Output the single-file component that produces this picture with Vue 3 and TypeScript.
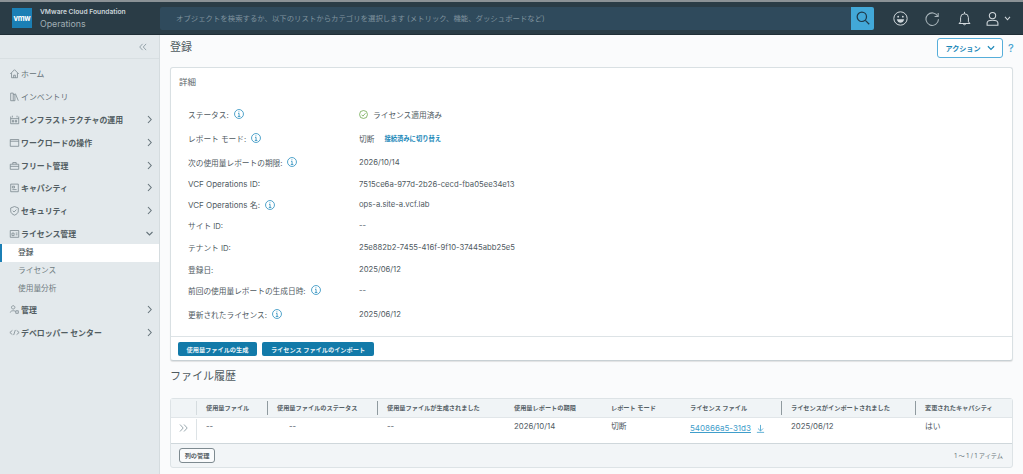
<script setup lang="ts">
interface NavItem { label: string; bold: boolean; icon: string; arrow?: string }
const navTop: NavItem[] = [
  { label: 'ホーム', bold: false, icon: 'home' },
  { label: 'インベントリ', bold: false, icon: 'inv' },
  { label: 'インフラストラクチャの運用', bold: true, icon: 'infra', arrow: 'r' },
  { label: 'ワークロードの操作', bold: true, icon: 'work', arrow: 'r' },
  { label: 'フリート管理', bold: true, icon: 'fleet', arrow: 'r' },
  { label: 'キャパシティ', bold: true, icon: 'cap', arrow: 'r' },
  { label: 'セキュリティ', bold: true, icon: 'sec', arrow: 'r' },
  { label: 'ライセンス管理', bold: true, icon: 'lic', arrow: 'd' },
]
const navSub = [
  { label: '登録', active: true },
  { label: 'ライセンス', active: false },
  { label: '使用量分析', active: false },
]
const navBottom: NavItem[] = [
  { label: '管理', bold: true, icon: 'admin', arrow: 'r' },
  { label: 'デベロッパー センター', bold: true, icon: 'dev', arrow: 'r' },
]
const iconPaths: Record<string, string> = {
  home: 'M1.5 7 L6.5 2 L11.5 7 M3 6 V11.5 H10 V6 M5.5 11.5 V8.5 H7.5 V11.5',
  inv: 'M2 2.5 H5 V11.5 H2 Z M5 4 H7 V11.5 H5 M7.5 3 L11 11.5',
  infra: 'M2 3 V11.5 H11.5 V3 M2 5.5 H11.5 M4 2 V4 M9.5 2 V4 M4 7.5 H5.5 V9.5 H4 Z M7.5 7.5 H9 V9.5 H7.5 Z',
  work: 'M1.5 3 H11.5 V11 H1.5 Z M1.5 5 H11.5',
  fleet: 'M1.5 5 H11.5 V11 H1.5 Z M4.5 5 V3 H8.5 V5 M1.5 7.5 H11.5',
  cap: 'M2 2.5 H11 V11.5 H2 Z M4 5 H6.5 V7 H4 Z M4 9 H9',
  sec: 'M6.5 1.8 L11 3.5 V7 C11 9.5 9 11 6.5 12 C4 11 2 9.5 2 7 V3.5 Z M4.5 6.8 L6 8.3 L8.7 5.5',
  lic: 'M1.5 3 H11.5 V11 H1.5 Z M3.5 6 H6 V9 H3.5 Z M8 6 H10 M8 8 H10',
  admin: 'M5 2 A2 2 0 1 1 4.9 2 Z M1.5 10 C1.5 7.5 7.5 7.5 7.5 9 M8 8 H11 V11 H8 Z',
  dev: 'M4 4 L1 6.5 L4 9 M9 4 L12 6.5 L9 9 M7.5 3.5 L5.5 9.5',
}
const details = [
  { label: 'ステータス:', info: true, kind: 'status', value: 'ライセンス適用済み', h: 24, latin: false },
  { label: 'レポート モード:', info: true, kind: 'mode', value: '切断', h: 24, latin: false },
  { label: '次の使用量レポートの期限:', info: true, kind: 'text', value: '2026/10/14', h: 24, latin: false },
  { label: 'VCF Operations ID:', info: false, kind: 'text', value: '7515ce6a-977d-2b26-cecd-fba05ee34e13', h: 20, latin: true },
  { label: 'VCF Operations 名:', info: true, kind: 'text', value: 'ops-a.site-a.vcf.lab', h: 21, latin: true },
  { label: 'サイト ID:', info: false, kind: 'text', value: '--', h: 20, latin: false },
  { label: 'テナント ID:', info: false, kind: 'text', value: '25e882b2-7455-416f-9f10-37445abb25e5', h: 25, latin: false },
  { label: '登録日:', info: false, kind: 'text', value: '2025/06/12', h: 18, latin: false },
  { label: '前回の使用量レポートの生成日時:', info: true, kind: 'text', value: '--', h: 24, latin: false },
  { label: '更新されたライセンス:', info: true, kind: 'text', value: '2025/06/12', h: 24, latin: false },
]
const columns = [
  { label: '使用量ファイル', w: 71, sep: true },
  { label: '使用量ファイルのステータス', w: 110, sep: true },
  { label: '使用量ファイルが生成されました', w: 127, sep: false },
  { label: '使用量レポートの期限', w: 97, sep: false },
  { label: 'レポート モード', w: 79, sep: false },
  { label: 'ライセンス ファイル', w: 101, sep: true },
  { label: 'ライセンスがインポートされました', w: 134, sep: true },
  { label: '変更されたキャパシティ', w: 96, sep: false },
]
</script>

<template>
  <div class="app">
    <header class="topbar">
      <div class="brand">
        <div class="logo">vmw</div>
        <div class="brand-text">
          <div class="brand-l1">VMware Cloud Foundation</div>
          <div class="brand-l2">Operations</div>
        </div>
      </div>
      <div class="search">
        <div class="search-input">オブジェクトを検索するか、以下のリストからカテゴリを選択します (メトリック、機能、ダッシュボードなど)</div>
        <div class="search-btn">
          <svg width="14" height="14" viewBox="0 0 18 18" fill="none" stroke="#1f3a4a" stroke-width="1.6"><circle cx="7.5" cy="7.5" r="6"/><path d="M12 12 L17 17"/></svg>
        </div>
      </div>
      <div class="top-icons">
        <svg width="15" height="15" viewBox="0 0 18 18" fill="none" stroke="#d0d7db" stroke-width="1.2"><circle cx="9" cy="9" r="8"/><circle cx="6.2" cy="6.8" r="1.1" fill="#d0d7db" stroke="none"/><circle cx="11.8" cy="6.8" r="1.1" fill="#d0d7db" stroke="none"/><path d="M4.6 10 H13.4 C13 13 10.6 14.2 9 14.2 C7.4 14.2 5 13 4.6 10 Z" fill="#d0d7db" stroke="none"/></svg>
        <svg width="15" height="15" viewBox="0 0 18 18" fill="none" stroke="#a9b5bb" stroke-width="1.3"><path d="M15.4 6.4 A7.5 7.5 0 1 0 16.2 10"/><path d="M11.5 6.6 H15.8 V2.4"/></svg>
        <svg width="15" height="15" viewBox="0 0 18 18" fill="none" stroke="#d0d7db" stroke-width="1.2"><path d="M4.3 13 V8 A4.7 4.7 0 0 1 13.7 8 V13 L15.6 15 H2.4 Z"/><path d="M9 1 V3.2"/><path d="M7.5 15.5 A1.6 1.6 0 0 0 10.5 15.5"/></svg>
        <div class="user">
          <svg width="15" height="15" viewBox="0 0 18 18" fill="none" stroke="#d0d7db" stroke-width="1.3"><circle cx="9" cy="5.5" r="3.8"/><path d="M2.5 17 V14.5 C2.5 12 5.5 11 9 11 C12.5 11 15.5 12 15.5 14.5 V17 Z"/></svg>
          <svg width="7" height="5" viewBox="0 0 8 6" fill="none" stroke="#d0d7db" stroke-width="1.3"><path d="M1 1 L4 4.5 L7 1"/></svg>
        </div>
      </div>
    </header>

    <div class="body">
      <aside class="sidebar">
        <div class="collapse">
          <svg width="8" height="8" viewBox="0 0 9 8" fill="none" stroke="#8c9ba3" stroke-width="1"><path d="M4 .5 L.8 4 L4 7.5 M8 .5 L4.8 4 L8 7.5"/></svg>
        </div>
        <nav class="nav">
          <div v-for="n in navTop" :key="n.label" class="nav-row" :class="{ bold: n.bold }">
            <svg class="nav-icon" width="11" height="11" viewBox="0 0 13 13" fill="none" stroke="#75838a" stroke-width="0.9"><path :d="iconPaths[n.icon]"/></svg>
            <span class="nav-label">{{ n.label }}</span>
            <svg v-if="n.arrow === 'r'" class="arrow" width="7" height="9" viewBox="0 0 7 9" fill="none" stroke="#66747b" stroke-width="1.1"><path d="M2 1 L5.2 4.5 L2 8"/></svg>
            <svg v-if="n.arrow === 'd'" class="arrow" width="7" height="9" viewBox="0 0 7 9" fill="none" stroke="#66747b" stroke-width="1.1"><path d="M.5 3 L3.5 6 L6.5 3"/></svg>
          </div>
          <div class="sub-list">
            <div v-for="s in navSub" :key="s.label" class="nav-sub" :class="{ active: s.active }">{{ s.label }}</div>
          </div>
          <div v-for="n in navBottom" :key="n.label" class="nav-row bold">
            <svg class="nav-icon" width="11" height="11" viewBox="0 0 13 13" fill="none" stroke="#75838a" stroke-width="0.9"><path :d="iconPaths[n.icon]"/></svg>
            <span class="nav-label">{{ n.label }}</span>
            <svg class="arrow" width="7" height="9" viewBox="0 0 7 9" fill="none" stroke="#66747b" stroke-width="1.1"><path d="M2 1 L5.2 4.5 L2 8"/></svg>
          </div>
        </nav>
      </aside>

      <main class="main">
        <div class="page-head">
          <h1 class="page-title">登録</h1>
          <div class="head-actions">
            <button class="action-btn">アクション
              <svg width="8" height="6" viewBox="0 0 9 6" fill="none" stroke="#1a87b8" stroke-width="1.3"><path d="M1 1 L4.5 4.5 L8 1"/></svg>
            </button>
            <span class="help">?</span>
          </div>
        </div>

        <section class="card">
          <div class="card-body">
            <div class="card-title">詳細</div>
            <div class="rows">
              <div v-for="d in details" :key="d.label" class="row" :style="{ height: d.h + 'px' }">
                <div class="row-label" :class="{ latin: d.latin }">
                  <span>{{ d.label }}</span>
                  <svg v-if="d.info" class="info" width="10" height="10" viewBox="0 0 11 11" fill="none" stroke="#2b8fbf" stroke-width="0.9"><circle cx="5.5" cy="5.5" r="4.9"/><path d="M4.4 4.8 H5.6 V8.2 M4.2 8.2 H7 M5.4 2.6 V3.6"/></svg>
                </div>
                <div class="row-value">
                  <svg v-if="d.kind === 'status'" class="ok" width="9" height="9" viewBox="0 0 10 10" fill="none" stroke="#6fa84f" stroke-width="0.9"><circle cx="5" cy="5" r="4.4"/><path d="M2.8 5.2 L4.4 6.8 L7.2 3.6"/></svg>
                  <span>{{ d.value }}</span>
                  <a v-if="d.kind === 'mode'" class="switch">接続済みに切り替え</a>
                </div>
              </div>
            </div>
          </div>
          <div class="card-foot">
            <button class="primary gen">使用量ファイルの生成</button>
            <button class="primary imp">ライセンス ファイルのインポート</button>
          </div>
        </section>

        <h2 class="section-title">ファイル履歴</h2>

        <section class="grid">
          <div class="grid-head">
            <div class="expander-cell"></div>
            <div v-for="c in columns" :key="c.label" class="th" :class="{ sep: c.sep }" :style="{ width: c.w + 'px' }">{{ c.label }}</div>
          </div>
          <div class="grid-row">
            <div class="expander-cell body-exp">
              <svg width="9" height="8" viewBox="0 0 9 8" fill="none" stroke="#9aa8af" stroke-width="1"><path d="M1 .5 L4.2 4 L1 7.5 M5 .5 L8.2 4 L5 7.5"/></svg>
            </div>
            <div class="td" :style="{ width: columns[0].w + 'px' }">--</div>
            <div class="td td-center" :style="{ width: columns[1].w + 'px' }">--</div>
            <div class="td" :style="{ width: columns[2].w + 'px' }">--</div>
            <div class="td" :style="{ width: columns[3].w + 'px' }">2026/10/14</div>
            <div class="td" :style="{ width: columns[4].w + 'px' }">切断</div>
            <div class="td td-link" :style="{ width: columns[5].w + 'px' }">
              <a class="file-link">540866a5-31d3</a>
              <svg class="dl" width="9" height="9" viewBox="0 0 10 10" fill="none" stroke="#3f9ecb" stroke-width="0.9"><path d="M5 1 V7.5 M2.2 5 L5 7.8 L7.8 5 M1 9.3 H9"/></svg>
            </div>
            <div class="td" :style="{ width: columns[6].w + 'px' }">2025/06/12</div>
            <div class="td" :style="{ width: columns[7].w + 'px' }">はい</div>
          </div>
          <div class="grid-foot">
            <button class="manage">列の管理</button>
            <span class="count">1 ～ 1 / 1 アイテム</span>
          </div>
        </section>
      </main>
    </div>
  </div>
</template>

<style>
html, body { margin: 0; padding: 0; overflow: hidden; }
</style>

<style scoped>
.app {
  width: 1023px;
  height: 474px;
  display: flex;
  flex-direction: column;
  overflow: hidden;
  font-family: "Inter", "Noto Sans CJK JP", sans-serif;
  color: #4a5559;
  background: #fafbfc;
}
.topbar {
  height: 35px;
  flex: none;
  box-sizing: border-box;
  border-top: 2px solid #8b9296;
  border-bottom: 1px solid #1f2e36;
  background: #2a3c46;
  display: flex;
  align-items: center;
}
.brand { width: 160px; flex: none; display: flex; align-items: center; padding-left: 12px; box-sizing: border-box; }
.logo {
  width: 20px; height: 20px; background: #1b7fb5; color: #fff;
  font-size: 7.5px; font-weight: 700; display: flex; align-items: center; justify-content: center;
  letter-spacing: -0.3px; margin-right: 8px;
}
.brand-l1 { font-size: 6.7px; color: #ccd5da; font-weight: 600; line-height: 9px; white-space: nowrap; margin-bottom: 1px; }
.brand-l2 { font-size: 8.8px; color: #a0adb4; line-height: 11px; }
.search { flex: none; width: 714px; height: 23px; display: flex; }
.search-input {
  flex: 1; background: #2f4a5c; color: #7f929e; font-size: 7.4px; line-height: 23px;
  padding-left: 16px; border-radius: 2px 0 0 2px; white-space: nowrap; overflow: hidden;
}
.search-btn {
  width: 23px; background: #42a8d8; border-radius: 0 2px 2px 0;
  display: flex; align-items: center; justify-content: center;
}
.top-icons { flex: 1; display: flex; align-items: center; padding-left: 19px; gap: 17px; }
.user { display: flex; align-items: center; gap: 4px; margin-left: -4px; }

.body { flex: 1; display: flex; min-height: 0; }
.sidebar { width: 160px; flex: none; background: #e3e9ec; border-right: 1px solid #d5dcdf; box-sizing: border-box; }
.collapse {
  height: 24px; box-sizing: border-box; border-bottom: 1px solid #d8dfe2;
  display: flex; align-items: center; justify-content: flex-end; padding-right: 12px;
}
.nav { padding-top: 3.5px; }
.nav-row {
  height: 22.8px; display: flex; align-items: center; padding-left: 9px; padding-right: 6px;
  font-size: 7.9px; color: #667278; position: relative;
}
.nav-row.bold { font-weight: 700; color: #525d62; }
.nav-icon { flex: none; margin-right: 1px; }
.nav-label { flex: 1; white-space: nowrap; }
.arrow { flex: none; }
.sub-list { margin: -1px 0 -0.5px; }
.nav-sub {
  height: 18.3px; line-height: 18.3px; font-size: 7.7px; color: #6f7b80; padding-left: 18px; box-sizing: border-box;
}
.nav-sub.active {
  background: #fff; border-left: 2px solid #1b7fb5; padding-left: 16px; color: #4a5559; font-weight: 500;
}
.main { flex: 1; min-width: 0; padding: 0 10px 0 10px; }
.page-head { height: 32px; display: flex; align-items: flex-start; justify-content: space-between; padding-top: 3px; box-sizing: border-box; }
.page-title { margin: 0; font-size: 11px; line-height: 19px; font-weight: 400; color: #4f5a5f; }
.head-actions { display: flex; align-items: center; gap: 5px; }
.action-btn {
  width: 66px; height: 20px; box-sizing: border-box; border: 1px solid #56aeda; border-radius: 3px;
  background: #fff; color: #1a87b8; font-family: inherit; font-size: 7.1px; font-weight: 700;
  display: flex; align-items: center; justify-content: center; gap: 6px; padding: 0;
}
.help { color: #4aa6d2; font-size: 11px; font-weight: 500; width: 5px; margin-right: 0; }
.card {
  background: #fff; border: 1px solid #d9e0e3; border-bottom: 1px solid #c8d0d4; border-radius: 3px;
  box-shadow: 0 1px 1px rgba(0,0,0,.1); height: 294px; box-sizing: border-box;
  display: flex; flex-direction: column;
}
.card-body { flex: 1; padding: 8px 8px 0; }
.card-title { font-size: 8.5px; line-height: 13px; color: #5a6569; margin-top: 0; }
.rows { padding: 13px 0 0 9px; }
.row { display: flex; align-items: center; font-size: 7.7px; color: #4f5a5f; }
.row-label { width: 171px; flex: none; display: flex; align-items: center; gap: 5px; white-space: nowrap; }
.row-label.latin { font-size: 8px; }
.row-value { display: flex; align-items: center; white-space: nowrap; }
.ok { margin-right: 5px; }
.switch { color: #1a87b8; font-size: 6.3px; font-weight: 700; margin-left: 10px; }
.card-foot {
  height: 22px; flex: none; border-top: 1px solid #dde3e6; display: flex; align-items: center;
  padding: 1px 0 0 7px; gap: 5px;
}
.primary {
  height: 14px; border: none; border-radius: 2px; background: #127aa9; color: #e8f2f6;
  font-family: inherit; font-size: 6.2px; font-weight: 600; padding: 0; white-space: nowrap;
}
.gen { width: 79px; }
.imp { width: 112px; }
.section-title { margin: 7px 0 0; font-size: 11px; line-height: 16px; font-weight: 400; color: #4f5a5f; }
.grid {
  margin-top: 14px; border: 1px solid #dde3e6; border-radius: 3px; background: #f2f5f7; box-sizing: border-box; height: 70px;
}
.grid-head { height: 18px; display: flex; align-items: center; border-bottom: 1px solid #e1e6e9; background: #f0f4f6; }
.expander-cell { width: 26px; flex: none; box-sizing: border-box; }
.grid-head .expander-cell { height: 14px; border-right: 1px solid #d5dcdf; }
.th {
  box-sizing: border-box; padding-left: 9px; font-size: 6.2px; font-weight: 600; color: #566166;
  height: 14px; line-height: 14px; white-space: nowrap;
}
.th.sep { border-right: 1px solid #8f9a9f; }
.grid-row { height: 25px; display: flex; background: #fff; border-bottom: 1px solid #cfd7db; }
.body-exp { border-right: 1px solid #dde3e6; display: flex; justify-content: center; padding-top: 5px; margin-top: 1px; margin-bottom: 3px; }
.td { box-sizing: border-box; padding: 2px 0 0 9px; font-size: 7.8px; line-height: 12px; color: #4f5a5f; white-space: nowrap; }
.td-center { padding-left: 21px; }
.td-link { padding-top: 4px; }
.file-link { color: #3f9ecb; text-decoration: underline; font-size: 8px; }
.dl { margin-left: 5px; vertical-align: -2px; }
.grid-foot { height: 23px; display: flex; align-items: center; justify-content: space-between; padding: 0 9px 0 8px; }
.manage {
  height: 15px; width: 36px; padding: 0; box-sizing: border-box; border: 1px solid #7e8a90; border-radius: 3px; background: #fafbfc;
  font-family: inherit; font-size: 6.2px; font-weight: 600; color: #566166;
}
.count { font-size: 6.2px; color: #6a767b; }
</style>
